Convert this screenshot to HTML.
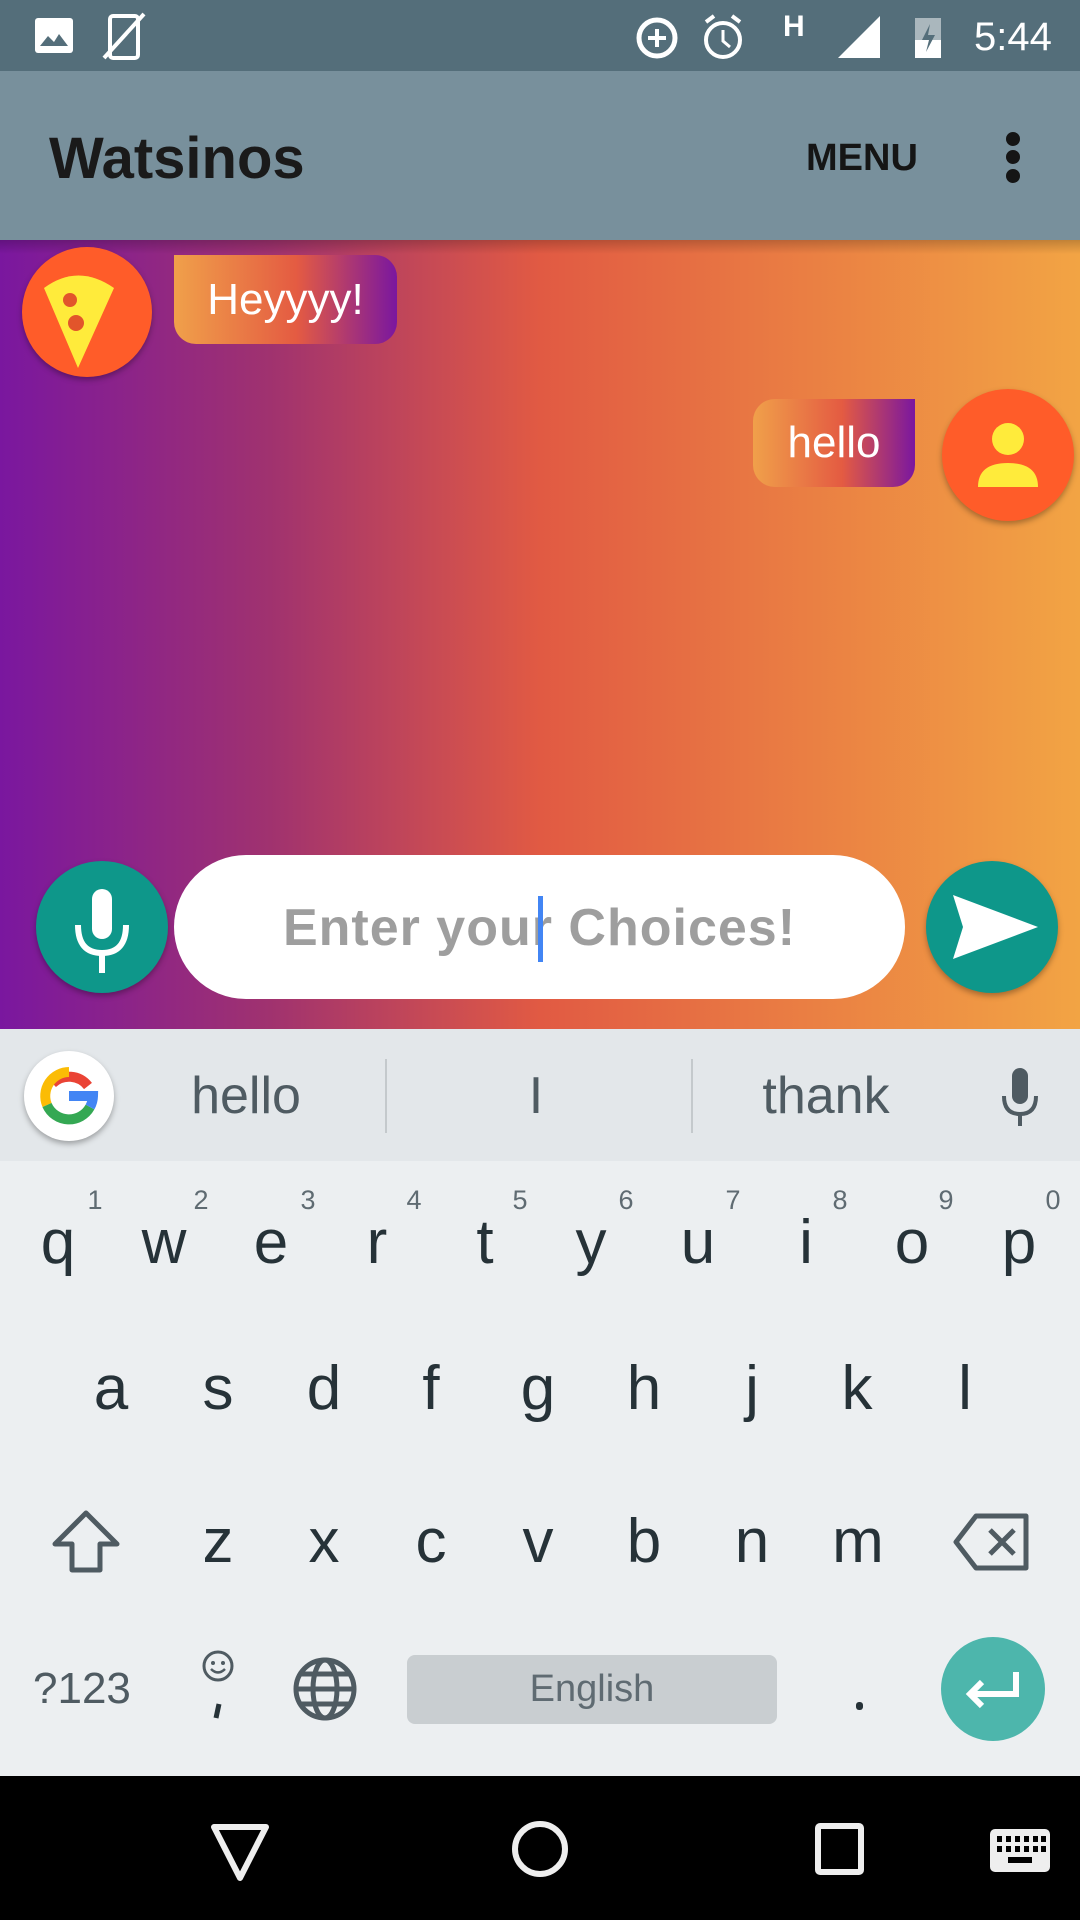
<!DOCTYPE html>
<html><head><meta charset="utf-8"><style>
*{margin:0;padding:0;box-sizing:border-box}
body{width:1080px;height:1920px;position:relative;overflow:hidden;font-family:"Liberation Sans",sans-serif;background:#eceff1}
.a{position:absolute}
.k{position:absolute;width:110px;margin-left:-55px;text-align:center;font-size:62px;color:#263238;line-height:80px;height:80px}
.d{position:absolute;font-size:27px;color:#5f6b72;width:30px;margin-left:-15px;text-align:center}
.s{position:absolute;font-size:52px;color:#4f5b62;width:200px;margin-left:-100px;text-align:center;top:1066px}
.sh{filter:drop-shadow(0 3px 3px rgba(0,0,0,.3))}
</style></head><body>
<div class="a" style="left:0;top:0;width:1080px;height:71px;background:#546e7a"></div>
<svg class="a" style="left:0;top:0" width="1080" height="71">
<rect x="35" y="18" width="38" height="35" rx="3" fill="#fff"/><path d="M40 46l8-10 6 6 5-8 9 12z" fill="#546e7a"/>
<rect x="110" y="16" width="28" height="42" rx="3" fill="none" stroke="#fff" stroke-width="4"/><line x1="104" y1="58" x2="144" y2="14" stroke="#fff" stroke-width="4"/>
<circle cx="657" cy="38" r="18" fill="none" stroke="#fff" stroke-width="5"/><path d="M657 29v18M648 38h18" stroke="#fff" stroke-width="4"/>
<circle cx="723" cy="40" r="17" fill="none" stroke="#fff" stroke-width="4"/><path d="M723 30v11l7 6" stroke="#fff" stroke-width="3" fill="none"/><path d="M706 22l8-6M740 22l-8-6" stroke="#fff" stroke-width="4"/>
<text x="783" y="36" font-size="30" font-weight="bold" fill="#fff" font-family="Liberation Sans">H</text>
<path d="M838 58L880 16v42z" fill="#fff"/>
<rect x="915" y="18" width="26" height="40" fill="#fff" opacity=".5"/><rect x="915" y="40" width="26" height="18" fill="#fff"/><path d="M930 24l-8 16h7l-3 12 9-17h-7z" fill="#546e7a"/>
<text x="974" y="50" font-size="40" fill="#fff" font-family="Liberation Sans">5:44</text>
</svg>
<div class="a" style="left:0;top:71px;width:1080px;height:169px;background:#78909c"></div>
<div class="a" style="left:49px;top:125px;font-size:58px;font-weight:bold;color:#1a1a1a">Watsinos</div>
<div class="a" style="left:806px;top:137px;font-size:38px;font-weight:bold;color:#151515">MENU</div>
<svg class="a" style="left:998px;top:130px" width="30" height="60"><circle cx="15" cy="9" r="7" fill="#151515"/><circle cx="15" cy="27" r="7" fill="#151515"/><circle cx="15" cy="46" r="7" fill="#151515"/></svg>
<div class="a" style="left:0;top:240px;width:1080px;height:789px;background:linear-gradient(90deg,#7a179f 0%,#a0326f 25%,#e15a43 50%,#ea7f43 75%,#f2a444 100%)"></div>
<div class="a" style="left:0;top:240px;width:1080px;height:14px;background:linear-gradient(rgba(0,0,0,.2),rgba(0,0,0,0))"></div>
<svg class="a sh" style="left:18px;top:243px" width="140" height="140">
<circle cx="69" cy="69" r="65" fill="#ff5c29"/><path d="M26 45 Q60 20 96 45 L60 125z" fill="#ffeb3b"/><circle cx="52" cy="57" r="7" fill="#e2552b"/><circle cx="58" cy="80" r="8" fill="#e2552b"/></svg>
<div class="a" style="left:174px;top:255px;width:223px;height:89px;border-radius:0 22px 22px 22px;background:linear-gradient(90deg,#f0a04a,#e45b42 55%,#7a179f);color:#fff;font-size:44px;line-height:89px;text-align:center">Heyyyy!</div>
<div class="a" style="left:753px;top:399px;width:162px;height:88px;border-radius:22px 0 22px 22px;background:linear-gradient(90deg,#f0a04a,#e45b42 55%,#7a179f);color:#fff;font-size:44px;line-height:88px;text-align:center">hello</div>
<svg class="a sh" style="left:940px;top:389px" width="140" height="140">
<circle cx="68" cy="66" r="66" fill="#ff5c29"/><circle cx="68" cy="50" r="16" fill="#ffeb3b"/><path d="M38 98 Q38 74 68 74 Q98 74 98 98z" fill="#ffeb3b"/></svg>
<svg class="a sh" style="left:36px;top:861px" width="132" height="136">
<circle cx="66" cy="66" r="66" fill="#0e978a"/><rect x="56" y="28" width="20" height="50" rx="10" fill="#fff"/><path d="M42 64 Q42 92 66 92 Q90 92 90 64" fill="none" stroke="#fff" stroke-width="6"/><rect x="63" y="90" width="6" height="22" fill="#fff"/></svg>
<div class="a" style="left:174px;top:855px;width:731px;height:144px;border-radius:72px;background:#fff"></div>
<div class="a" style="left:174px;top:898px;width:731px;text-align:center;font-size:52px;color:#9e9e9e;font-weight:bold;letter-spacing:1px">Enter your Choices!</div>
<div class="a" style="left:538px;top:896px;width:5px;height:66px;background:#4285f4"></div>
<svg class="a sh" style="left:926px;top:861px" width="132" height="136">
<circle cx="66" cy="66" r="66" fill="#0e978a"/><path d="M27 34 L112 66 L27 98 L37 66z" fill="#fff"/></svg>
<div class="a" style="left:0;top:1029px;width:1080px;height:132px;background:#e3e7ea"></div>
<svg class="a sh" style="left:22px;top:1050px" width="96" height="96">
<circle cx="47" cy="46" r="45" fill="#fff"/>
<path d="M66 36 A24 24 0 1 0 71 52" fill="none" stroke="#ea4335" stroke-width="10" stroke-dasharray="40 200"/>
<path d="M47 22 A24 24 0 0 0 25 55" fill="none" stroke="#fbbc05" stroke-width="10"/>
<path d="M25 55 A24 24 0 0 0 68 57" fill="none" stroke="#34a853" stroke-width="10"/>
<path d="M47 46h24 A24 24 0 0 1 68 57" fill="none" stroke="#4285f4" stroke-width="10"/></svg>
<div class="s" style="left:246px">hello</div>
<div class="s" style="left:536px">I</div>
<div class="s" style="left:826px">thank</div>
<div class="a" style="left:385px;top:1059px;width:2px;height:74px;background:#c4c9cc"></div>
<div class="a" style="left:691px;top:1059px;width:2px;height:74px;background:#c4c9cc"></div>
<svg class="a" style="left:1000px;top:1066px" width="40" height="64"><rect x="12" y="2" width="16" height="36" rx="8" fill="#4f5b62"/><path d="M4 30 Q4 48 20 48 Q36 48 36 30" fill="none" stroke="#4f5b62" stroke-width="4"/><rect x="18" y="46" width="4" height="14" fill="#4f5b62"/></svg>
<div class="k" style="left:58px;top:1203px">q</div><div class="d" style="left:95px;top:1185px">1</div>
<div class="k" style="left:164px;top:1203px">w</div><div class="d" style="left:201px;top:1185px">2</div>
<div class="k" style="left:271px;top:1203px">e</div><div class="d" style="left:308px;top:1185px">3</div>
<div class="k" style="left:377px;top:1203px">r</div><div class="d" style="left:414px;top:1185px">4</div>
<div class="k" style="left:485px;top:1203px">t</div><div class="d" style="left:520px;top:1185px">5</div>
<div class="k" style="left:591px;top:1203px">y</div><div class="d" style="left:626px;top:1185px">6</div>
<div class="k" style="left:698px;top:1203px">u</div><div class="d" style="left:733px;top:1185px">7</div>
<div class="k" style="left:806px;top:1203px">i</div><div class="d" style="left:840px;top:1185px">8</div>
<div class="k" style="left:912px;top:1203px">o</div><div class="d" style="left:946px;top:1185px">9</div>
<div class="k" style="left:1019px;top:1203px">p</div><div class="d" style="left:1053px;top:1185px">0</div>
<div class="k" style="left:111px;top:1349px">a</div><div class="k" style="left:218px;top:1349px">s</div><div class="k" style="left:324px;top:1349px">d</div>
<div class="k" style="left:431px;top:1349px">f</div><div class="k" style="left:538px;top:1349px">g</div><div class="k" style="left:644px;top:1349px">h</div>
<div class="k" style="left:752px;top:1349px">j</div><div class="k" style="left:857px;top:1349px">k</div><div class="k" style="left:965px;top:1349px">l</div>
<div class="k" style="left:218px;top:1502px">z</div><div class="k" style="left:324px;top:1502px">x</div><div class="k" style="left:431px;top:1502px">c</div>
<div class="k" style="left:538px;top:1502px">v</div><div class="k" style="left:644px;top:1502px">b</div><div class="k" style="left:752px;top:1502px">n</div><div class="k" style="left:858px;top:1502px">m</div>
<svg class="a" style="left:50px;top:1508px" width="72" height="68"><path d="M36 5 L67 36 H50 V62 H22 V36 H5z" fill="none" stroke="#4f5b62" stroke-width="5" stroke-linejoin="round"/></svg>
<svg class="a" style="left:952px;top:1512px" width="80" height="60"><path d="M24 4 H74 V56 H24 L4 30z" fill="none" stroke="#4f5b62" stroke-width="5" stroke-linejoin="round"/><path d="M38 18l24 24M62 18L38 42" stroke="#4f5b62" stroke-width="5"/></svg>
<div class="a" style="left:33px;top:1664px;font-size:44px;color:#4f5b62">?123</div>
<svg class="a" style="left:200px;top:1648px" width="40" height="80"><circle cx="18" cy="18" r="14" fill="none" stroke="#4f5b62" stroke-width="3"/><circle cx="13" cy="15" r="2" fill="#4f5b62"/><circle cx="23" cy="15" r="2" fill="#4f5b62"/><path d="M11 21 Q18 28 25 21" fill="none" stroke="#4f5b62" stroke-width="2.5"/><path d="M19 56 L16 70" stroke="#263238" stroke-width="5"/></svg>
<svg class="a" style="left:292px;top:1656px" width="66" height="66"><g fill="none" stroke="#4f5b62" stroke-width="5"><circle cx="33" cy="33" r="29"/><ellipse cx="33" cy="33" rx="12" ry="29"/><path d="M4 33h58M9 18h48M9 48h48"/></g></svg>
<div class="a" style="left:407px;top:1655px;width:370px;height:69px;background:#c9ced1;border-radius:8px;text-align:center;font-size:38px;line-height:69px;color:#5f6b72">English</div>
<div class="a" style="left:856px;top:1702px;width:7px;height:8px;border-radius:3px;background:#263238"></div>
<svg class="a" style="left:940px;top:1636px" width="106" height="106"><circle cx="53" cy="53" r="52" fill="#4db6ac"/><path d="M76 36 V58 H32" fill="none" stroke="#fff" stroke-width="6"/><path d="M42 46 L30 58 L42 70" fill="none" stroke="#fff" stroke-width="6"/></svg>
<div class="a" style="left:0;top:1776px;width:1080px;height:144px;background:#000"></div>
<svg class="a" style="left:0;top:1776px" width="1080" height="144">
<path d="M214 51 H266 L240 102z" fill="none" stroke="#eee" stroke-width="6" stroke-linejoin="round"/>
<circle cx="540" cy="73" r="25" fill="none" stroke="#eee" stroke-width="6"/>
<rect x="818" y="50" width="43" height="46" rx="2" fill="none" stroke="#eee" stroke-width="6"/>
<rect x="990" y="53" width="60" height="43" rx="5" fill="#eee"/>
<g fill="#000"><rect x="997" y="60" width="5" height="6"/><rect x="1006" y="60" width="5" height="6"/><rect x="1015" y="60" width="5" height="6"/><rect x="1024" y="60" width="5" height="6"/><rect x="1033" y="60" width="5" height="6"/><rect x="1041" y="60" width="5" height="6"/>
<rect x="997" y="70" width="5" height="6"/><rect x="1006" y="70" width="5" height="6"/><rect x="1015" y="70" width="5" height="6"/><rect x="1024" y="70" width="5" height="6"/><rect x="1033" y="70" width="5" height="6"/><rect x="1041" y="70" width="5" height="6"/>
<rect x="1008" y="81" width="24" height="6"/></g>
</svg>
</body></html>
